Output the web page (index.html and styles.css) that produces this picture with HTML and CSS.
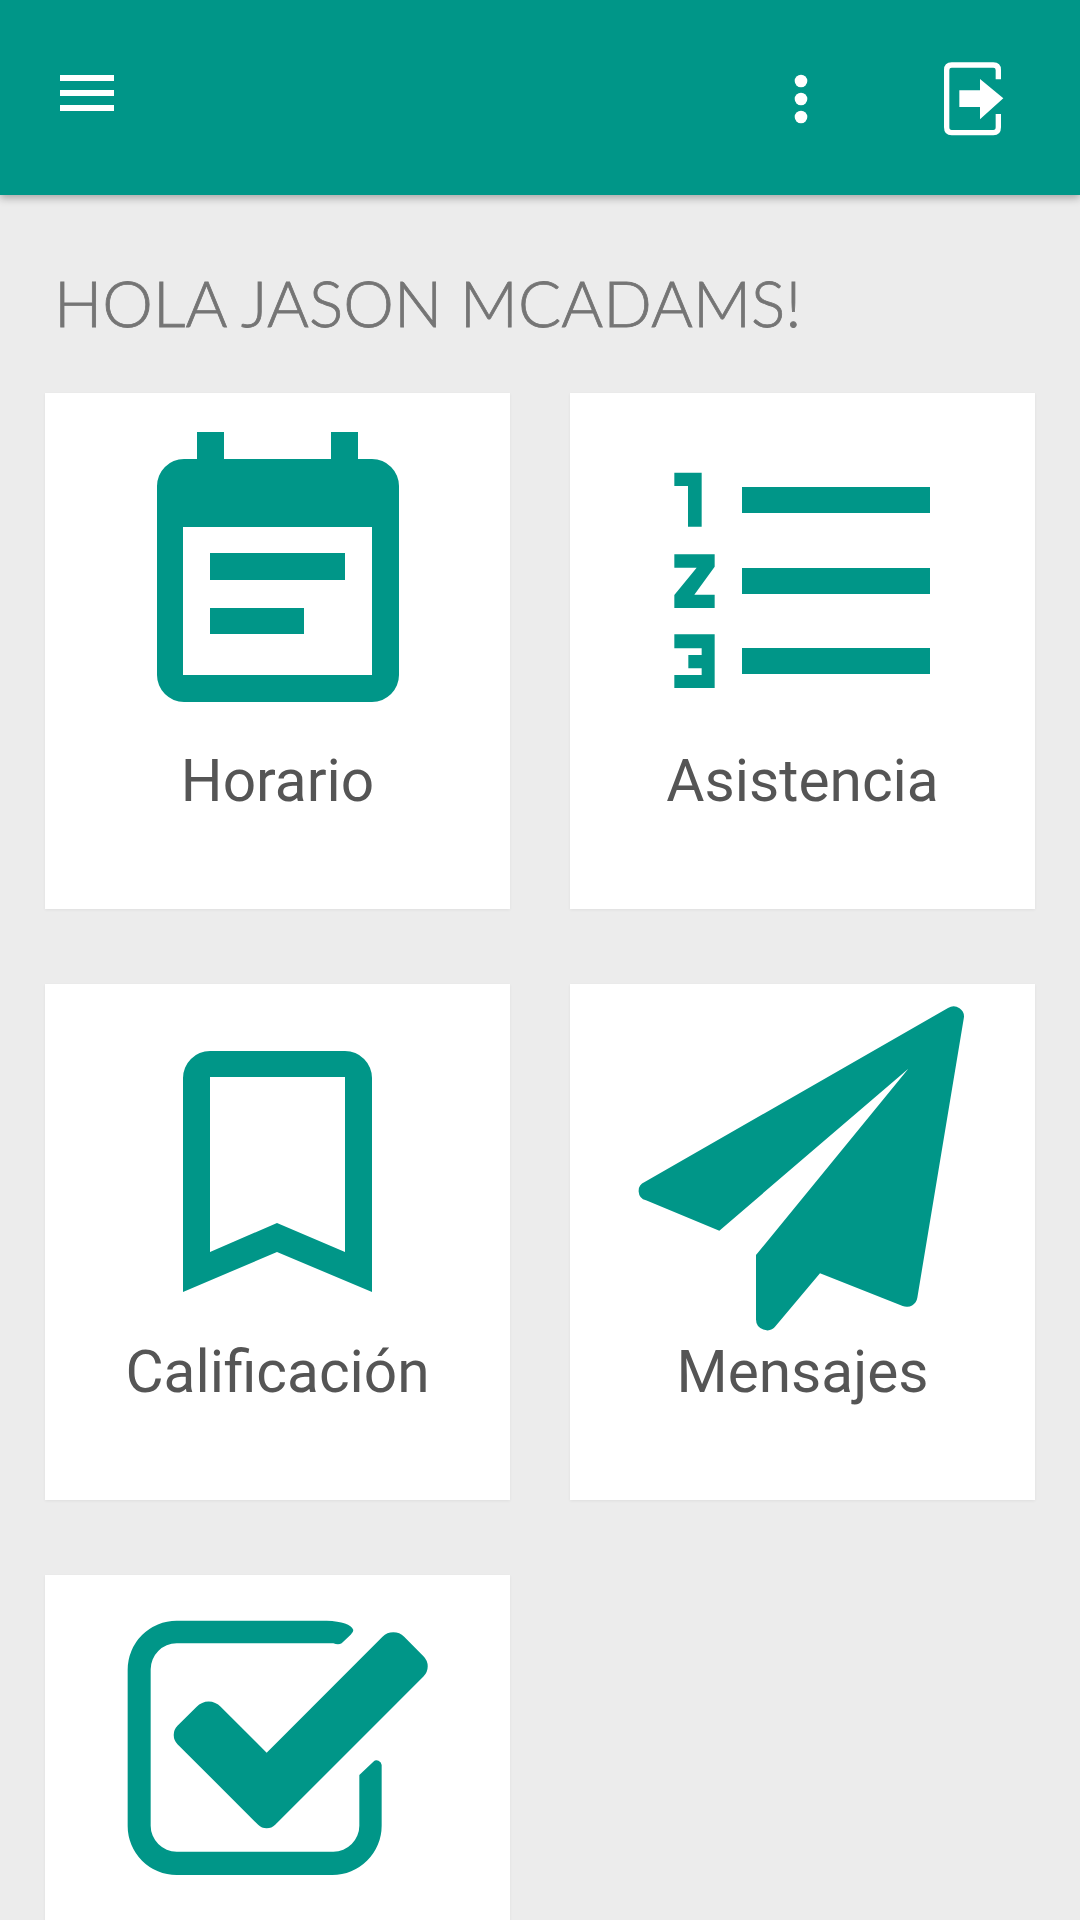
FILE: index.html
```html
<!DOCTYPE html>
<html lang="es">
<head>
<meta charset="utf-8">
<title>Inicio</title>
<link rel="stylesheet" href="styles.css">
</head>
<body>
<header class="appbar">
  <svg class="icon-menu" viewBox="60 75 54 36"><rect x="60" y="75" width="54" height="6"/><rect x="60" y="90" width="54" height="6"/><rect x="60" y="105" width="54" height="6"/></svg>
  <svg class="icon-dots" viewBox="794 74 14 50"><circle cx="801" cy="81" r="6.3"/><circle cx="801" cy="99" r="6.3"/><circle cx="801" cy="117" r="6.3"/></svg>
  <svg class="icon-exit" viewBox="60 60 210 240"><path class="exit-frame" d="M235 118V90Q235 75 220 75H95Q80 75 80 90V262Q80 278 95 278H220Q235 278 235 262V222"/><path d="M118 151H180V117L250 175L180 238V201H118Z"/></svg>
</header>
<main class="content">
  <h1 class="greeting">HOLA JASON MCADAMS!</h1>
  <div class="grid">
    <a class="card">
      <svg class="card-icon" viewBox="45 393 465 350"><path fill-rule="evenodd" d="M197 432H224V459H331V432H358V459H372A27 27 0 0 1 399 486V675A27 27 0 0 1 372 702H184A27 27 0 0 1 157 675V486A27 27 0 0 1 184 459H197ZM183 527V675H372V527Z"/><rect x="210" y="553" width="135" height="27"/><rect x="210" y="608" width="94" height="26"/></svg>
      <span class="card-label">Horario</span>
    </a>
    <a class="card">
      <svg class="card-icon" viewBox="570 393 465 350"><rect x="742" y="487" width="188" height="26"/><rect x="742" y="568" width="188" height="26"/><rect x="742" y="648" width="188" height="26"/><g transform="translate(640 450) scale(.33333)"><path d="M103 68H185V230H144V108H103Z"/><path d="M103 313H224V350L163 434H224V474H103V435L170 353H103Z"/><path d="M103 553H224V714H103V675H185V655H145V615H185V595H103Z"/></g></svg>
      <span class="card-label">Asistencia</span>
    </a>
    <a class="card">
      <svg class="card-icon" viewBox="45 984 465 350"><path fill-rule="evenodd" d="M183 1078A27 27 0 0 1 210 1051H345A27 27 0 0 1 372 1078V1292L277 1252L183 1292ZM210 1077V1252L277 1223L345 1252V1077Z"/></svg>
      <span class="card-label">Calificación</span>
    </a>
    <a class="card">
      <svg class="card-icon" viewBox="570 984 465 350"><g transform="translate(620 990) scale(.33333)"><path d="M984 54A31 31 0 0 1 1031 87L892 923A32 32 0 0 1 848 948L600 850L467 1008A33 33 0 0 1 408 987V795L865 236L298 722L78 631A29 29 0 0 1 74 576Z"/></g></svg>
      <span class="card-label">Mensajes</span>
    </a>
    <a class="card">
      <svg class="card-icon" viewBox="45 1575 465 350"><g transform="translate(110 1600) scale(.33333)"><path d="M200 62H650Q720 65 730 90Q730 97 722 104L695 130Q685 136 670 130H200A78 78 0 0 0 122 208V677A78 78 0 0 0 200 755H670A78 78 0 0 0 748 677V525L790 485A15 15 0 0 1 815 495V677A148 148 0 0 1 667 825H200A147 147 0 0 1 53 678V209A147 147 0 0 1 200 62Z"/><path d="M470 458L817.500 110.500A46 46 0 0 1 882.500 110.500L940.400 168.400A43 43 0 0 1 940.400 229.600L495.600 674.400A36 36 0 0 1 444.400 674.400L202.400 432.400A39 39 0 0 1 202.400 377.600L260 320A50 50 0 0 1 332 320Z"/></g></svg>
    </a>
  </div>
</main>
</body>
</html>
```
FILE: styles.css
```css
* { box-sizing: border-box; }
html, body { margin: 0; height: 1920px; overflow: hidden; }
body { background: #ececec; font-family: Roboto, "Liberation Sans", sans-serif; }

.appbar {
  position: relative;
  display: flex;
  align-items: flex-start;
  height: 195px;
  background: #009688;
  box-shadow: 0 3px 8px rgba(0, 0, 0, .3);
}
.appbar svg { display: block; fill: #fff; flex: none; }
.icon-menu { width: 54px; height: 36px; margin: 75px 0 0 60px; }
.icon-dots { width: 14px; height: 50px; margin: 74px 0 0 680px; }
.icon-exit { width: 70px; height: 80px; margin: 60px 0 0 132px; filter: blur(.6px); }
.exit-frame { fill: none; stroke: #fff; stroke-width: 16; }

.content { padding: 0 45px; }
.greeting {
  margin: 0;
  height: 198px;
  padding: 70px 0 0 9px;
  font: 300 64px/76px Lato, "Open Sans", sans-serif;
  letter-spacing: .05px;
  -webkit-text-stroke: .8px #757575;
  color: #757575;
  white-space: nowrap;
}
.grid {
  display: grid;
  grid-template-columns: 465px 465px;
  grid-auto-rows: 516px;
  column-gap: 60px;
  row-gap: 75px;
}
.card {
  display: flex;
  flex-direction: column;
  align-items: center;
  background: #fff;
  box-shadow: 0 1px 3px rgba(0, 0, 0, .06);
}
.card-icon { display: block; width: 465px; height: 350px; fill: #009688; flex: none; }
.card-label {
  margin-top: 3px;
  font-size: 58.6px;
  line-height: 70px;
  color: #555;
}
```
